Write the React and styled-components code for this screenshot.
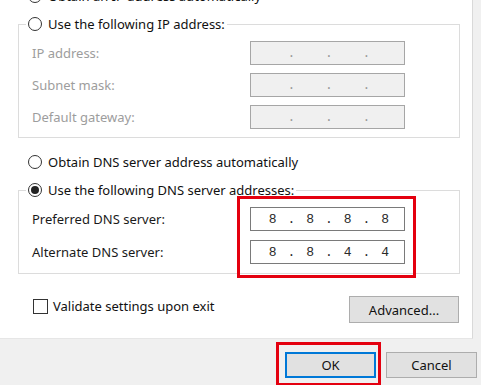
import React from 'react';
import styled, { createGlobalStyle } from 'styled-components';

const GlobalStyle = createGlobalStyle`
  body {
    margin: 0;
    background: #f0f0f0;
    font-family: "Noto Sans", "Open Sans", sans-serif;
    font-size: 13px;
    color: #1a1a1a;
  }
`;

const Dialog = styled.div`
  width: 481px;
  height: 385px;
  overflow: hidden;
  display: flex;
  flex-direction: column;
  background: #f0f0f0;
`;

const Page = styled.div`
  box-sizing: border-box;
  width: 473px;
  height: 339px;
  background: #fff;
  border-right: 1px solid #d9d9d9;
  border-bottom: 1px solid #e6e6e6;
  padding-left: 18px;
  display: flex;
  flex-direction: column;
`;

const RadioRow = styled.label`
  display: flex;
  align-items: center;
  gap: 6px;
  height: 16px;
  padding-left: ${p => p.$indent || 0}px;
  margin-top: ${p => p.$top || 0}px;
  color: #111;
  white-space: nowrap;
`;

const Radio = styled.span`
  box-sizing: border-box;
  width: 14px;
  height: 14px;
  flex: none;
  border-radius: 50%;
  border: 1px solid #333;
  background: #fff;
  display: flex;
  align-items: center;
  justify-content: center;
  &::after {
    content: '';
    width: 8px;
    height: 8px;
    border-radius: 50%;
    background: ${p => (p.$checked ? '#222' : 'transparent')};
  }
`;

const Group = styled.fieldset`
  box-sizing: border-box;
  width: 442px;
  margin: 12px 0 0;
  padding: 9px 0 ${p => p.$bottom}px;
  border: 1px solid #dcdcdc;
  min-inline-size: 0;
`;

const Legend = styled.legend`
  margin-left: 7px;
  padding: 0 2px;
  line-height: 16px;
`;

const Rows = styled.div`
  display: grid;
  grid-template-columns: 218px 155px;
  grid-auto-rows: 24px;
  row-gap: ${p => p.$gap}px;
  align-items: center;
  padding-left: 13px;
`;

const FieldLabel = styled.span`
  color: ${p => (p.$dim ? '#9d9d9d' : '#1a1a1a')};
`;

const Stack = styled.div`
  display: flex;
  flex-direction: column;
  gap: ${p => p.$gap}px;
`;

const Highlight = styled.div`
  position: relative;
  grid-column: ${p => p.$column || 'auto'};
  grid-row: ${p => p.$row || 'auto'};
  &::after {
    content: '';
    position: absolute;
    inset: ${p => p.$inset};
    border: 3px solid #e4000f;
    pointer-events: none;
  }
`;

const IpBox = styled.div`
  box-sizing: border-box;
  width: 155px;
  height: 24px;
  display: flex;
  align-items: center;
  padding-left: 8px;
  border: 1px solid ${p => (p.$disabled ? '#a6a6a6' : '#7a7a7a')};
  background: ${p => (p.$disabled ? '#f0f0f0' : '#fff')};
  font-family: "Liberation Mono", "DejaVu Sans Mono", monospace;
  font-size: 13px;
  color: ${p => (p.$disabled ? '#9a9a9a' : '#2a2a2a')};
`;

const Octet = styled.span`
  width: 27.5px;
  text-align: center;
`;

const Dot = styled.span`
  width: 10px;
  text-align: center;
`;

const BottomRow = styled.div`
  width: 442px;
  display: flex;
  justify-content: space-between;
  align-items: flex-start;
  margin-top: 22px;
`;

const CheckRow = styled.label`
  display: flex;
  align-items: center;
  gap: 5px;
  margin: 1px 0 0 15px;
  color: #111;
`;

const Check = styled.span`
  box-sizing: border-box;
  width: 15px;
  height: 15px;
  border: 1px solid #333;
  background: #fff;
`;

const Button = styled.button`
  box-sizing: border-box;
  width: ${p => p.$width}px;
  height: ${p => p.$height}px;
  margin-right: ${p => p.$right || 0}px;
  padding: 0;
  font-family: inherit;
  font-size: 13px;
  color: #111;
  background: #e1e1e1;
  border: 1px solid ${p => (p.$primary ? '#0078d7' : '#adadad')};
  box-shadow: ${p => (p.$primary ? 'inset 0 0 0 1px #0078d7' : 'none')};
`;

const Footer = styled.div`
  flex: 1;
  display: flex;
  justify-content: flex-end;
  align-items: flex-start;
  gap: 10px;
  padding: 13px 4px 0 0;
`;

const IpField = ({ value, disabled }) => {
  const parts = value ? value.split('.') : ['', '', '', ''];
  return (
    <IpBox $disabled={disabled}>
      {parts.map((p, i) => (
        <React.Fragment key={i}>
          <Octet>{p}</Octet>
          {i < 3 && <Dot>.</Dot>}
        </React.Fragment>
      ))}
    </IpBox>
  );
};

const ipRows = ['IP address:', 'Subnet mask:', 'Default gateway:'];

const App = () => {
  return (
    <Dialog>
      <GlobalStyle />
      <Page>
        <RadioRow $indent={10} $top={-12}>
          <Radio $checked />
          Obtain an IP address automatically
        </RadioRow>

        <Group $bottom={8}>
          <Legend>
            <RadioRow>
              <Radio />
              Use the following IP address:
            </RadioRow>
          </Legend>
          <Rows $gap={8}>
            {ipRows.map(label => (
              <React.Fragment key={label}>
                <FieldLabel $dim>{label}</FieldLabel>
                <IpField disabled />
              </React.Fragment>
            ))}
          </Rows>
        </Group>

        <RadioRow $indent={10} $top={16}>
          <Radio />
          Obtain DNS server address automatically
        </RadioRow>

        <Group $bottom={9}>
          <Legend>
            <RadioRow>
              <Radio $checked />
              Use the following DNS server addresses:
            </RadioRow>
          </Legend>
          <Rows $gap={9}>
            <FieldLabel>Preferred DNS server:</FieldLabel>
            <Highlight $column="2" $row="1 / span 2" $inset="-11px -11px -14px -13px">
              <Stack $gap={9}>
                <IpField value="8.8.8.8" />
                <IpField value="8.8.4.4" />
              </Stack>
            </Highlight>
            <FieldLabel>Alternate DNS server:</FieldLabel>
          </Rows>
        </Group>

        <BottomRow>
          <CheckRow>
            <Check />
            Validate settings upon exit
          </CheckRow>
          <Button $width={110} $height={27} $right={1}>Advanced...</Button>
        </BottomRow>
      </Page>

      <Footer>
        <Highlight $inset="-10px -5px -8px -9px">
          <Button $primary $width={91} $height={26}>OK</Button>
        </Highlight>
        <Button $width={91} $height={26}>Cancel</Button>
      </Footer>
    </Dialog>
  );
};

export default App;
